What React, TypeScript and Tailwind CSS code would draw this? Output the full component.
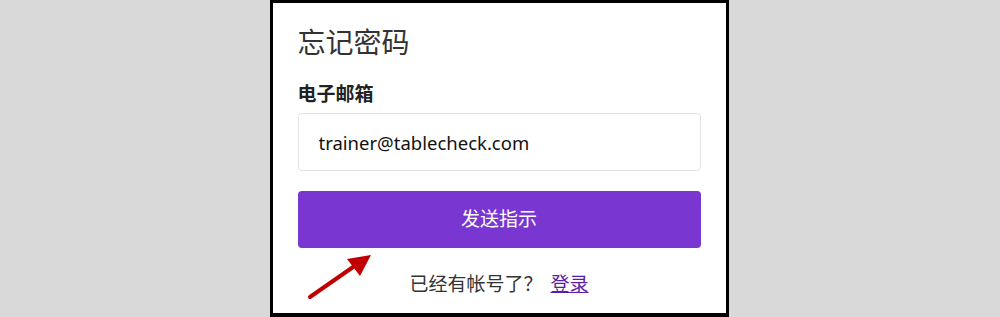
import React from "react";

const font = { fontFamily: '"Noto Sans", "Noto Sans CJK SC", sans-serif' };

const App: React.FC = () => {
  return (
    <div className="w-full h-[317px] bg-[#d9d9d9] flex justify-center overflow-hidden" style={font}>
      <div className="relative ml-[-2px] w-[459px] h-[317px] bg-white border-[3px] border-b-4 border-black px-[25px] pt-[17px]">
        <h1 className="text-[28px] leading-[44px] text-[#333] font-normal">忘记密码</h1>

        <form className="mt-[16px] flex flex-col">
          <label htmlFor="email" className="text-[19px] leading-[28px] font-bold text-[#222]">
            电子邮箱
          </label>
          <input
            id="email"
            type="email"
            defaultValue="trainer@tablecheck.com"
            className="mt-[5px] h-[58px] w-full rounded border border-[#e3e3e3] px-[20px] text-[18.5px] text-[#111] outline-none"
          />
          <button
            type="button"
            className="mt-[20px] h-[57px] w-full rounded bg-[#7936d1] text-white text-[19px]"
          >
            发送指示
          </button>
          <div className="mt-[22px] text-center text-[19px] leading-[28px] text-[#333]">
            已经有帐号了？
            <a href="#" className="ml-[8px] text-[#5a1da5] underline">
              登录
            </a>
          </div>
        </form>

        {/* red arrow annotation */}
        <svg className="absolute left-[31px] top-[248px]" width="70" height="52" viewBox="0 0 70 52">
          <line x1="6" y1="46" x2="52" y2="14" stroke="#c00000" strokeWidth="4" strokeLinecap="round" />
          <polygon points="67,4 43,8 56,25" fill="#c00000" />
        </svg>
      </div>
    </div>
  );
};

export default App;
